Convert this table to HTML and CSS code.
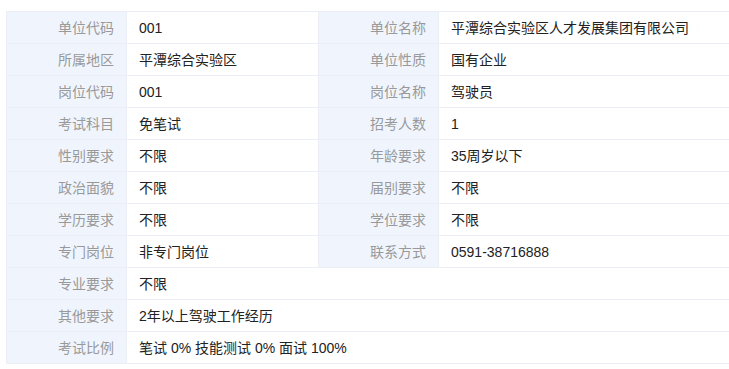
FILE: index.html
```html
<!DOCTYPE html>
<html lang="zh-CN">
<head>
<meta charset="utf-8">
<link rel="stylesheet" href="styles.css">
</head>
<body>
<div class="wrap">
<table class="info">
  <colgroup><col class="c-l"><col class="c-v"><col class="c-l"><col></colgroup>
  <tr><th>单位代码</th><td>001</td><th>单位名称</th><td>平潭综合实验区人才发展集团有限公司</td></tr>
  <tr><th>所属地区</th><td>平潭综合实验区</td><th>单位性质</th><td>国有企业</td></tr>
  <tr><th>岗位代码</th><td>001</td><th>岗位名称</th><td>驾驶员</td></tr>
  <tr><th>考试科目</th><td>免笔试</td><th>招考人数</th><td>1</td></tr>
  <tr><th>性别要求</th><td>不限</td><th>年龄要求</th><td>35周岁以下</td></tr>
  <tr><th>政治面貌</th><td>不限</td><th>届别要求</th><td>不限</td></tr>
  <tr><th>学历要求</th><td>不限</td><th>学位要求</th><td>不限</td></tr>
  <tr><th>专门岗位</th><td>非专门岗位</td><th>联系方式</th><td>0591-38716888</td></tr>
  <tr><th>专业要求</th><td colspan="3">不限</td></tr>
  <tr><th>其他要求</th><td colspan="3">2年以上驾驶工作经历</td></tr>
  <tr><th>考试比例</th><td colspan="3">笔试 0% 技能测试 0% 面试 100%</td></tr>
</table>
</div>
</body>
</html>
```
FILE: styles.css
```css
html, body {
  margin: 0;
  padding: 0;
  background: #fff;
  overflow: hidden;
}
.wrap {
  padding: 11px 0 0 6px;
}
.info {
  width: 730px;
  border-collapse: collapse;
  table-layout: fixed;
  font-family: "Liberation Sans", "Noto Sans CJK SC", sans-serif;
  font-size: 14px;
}
.c-l { width: 120px; }
.c-v { width: 192px; }
.info th, .info td {
  height: 32px;
  padding: 0 12px;
  border: 1px solid #ebeef5;
  box-sizing: border-box;
  line-height: 20px;
  white-space: nowrap;
}
.info th {
  background: #f0f5fd;
  color: #999;
  font-weight: normal;
  text-align: right;
}
.info td {
  color: #222;
  text-align: left;
}
```
